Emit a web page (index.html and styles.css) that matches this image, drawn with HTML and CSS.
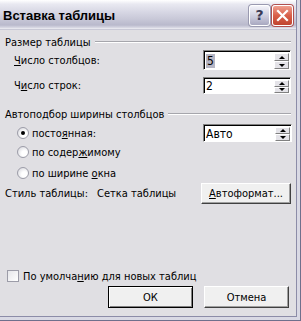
FILE: index.html
```html
<!DOCTYPE html>
<html>
<head>
<meta charset="utf-8">
<link rel="stylesheet" href="styles.css">
</head>
<body>
<div class="frame">
  <div class="window">
    <div class="titlebar">
      <span class="title">Вставка таблицы</span>
      <div class="tbtns">
        <span class="tb help">?</span>
        <span class="tb close">
          <svg width="13" height="13" viewBox="0 0 13 13"><path d="M2 2L11 11M11 2L2 11" stroke="#fff" stroke-width="2.2" stroke-linecap="square"/></svg>
        </span>
      </div>
    </div>
    <div class="content">
      <div class="group-head"><span>Размер таблицы</span><span class="etch"></span></div>
      <div class="row r1">
        <span class="label ind"><span><u>Ч</u>исло столбцов:</span></span>
        <div class="spin">
          <div class="field"><span class="sel">5</span></div>
          <div class="arrows"><span class="ab"><i class="up"></i></span><span class="ab"><i class="dn"></i></span></div>
        </div>
      </div>
      <div class="row r2">
        <span class="label ind"><span>Ч<u>и</u>сло строк:</span></span>
        <div class="spin">
          <div class="field">2</div>
          <div class="arrows"><span class="ab"><i class="up"></i></span><span class="ab"><i class="dn"></i></span></div>
        </div>
      </div>
      <div class="group-head g2"><span>Автоподбор ширины столбцов</span><span class="etch"></span></div>
      <div class="row r3">
        <span class="label radio-l"><span class="radio on"></span><span>посто<u>я</u>нная:</span></span>
        <div class="spin wide">
          <div class="field">Авто</div>
          <div class="arrows"><span class="ab"><i class="up"></i></span><span class="ab"><i class="dn"></i></span></div>
        </div>
      </div>
      <div class="row r4"><span class="label radio-l"><span class="radio"></span><span>по содер<u>ж</u>имому</span></span></div>
      <div class="row r5"><span class="label radio-l"><span class="radio"></span><span>по ширине <u>о</u>кна</span></span></div>
      <div class="row r6">
        <span class="label style-l">Стиль таблицы:</span>
        <span class="label style-v">Сетка таблицы</span>
        <span class="btn auto"><span><u>А</u>втоформат...</span></span>
      </div>
      <div class="row r7"><span class="label"><span class="check"></span><span>По умолча<u>н</u>ию для новых таблиц</span></span></div>
      <div class="row r8">
        <span class="btn ok def">ОК</span>
        <span class="btn cancel">Отмена</span>
      </div>
    </div>
  </div>
</div>
</body>
</html>
```
FILE: styles.css
```css
html, body { margin: 0; padding: 0; }
body {
  width: 301px; height: 321px; overflow: hidden;
  font-family: "DejaVu Sans Condensed", "DejaVu Sans", sans-serif;
  font-size: 11px; color: #000;
  background: #e0dfe3;
}
.frame {
  width: 301px; height: 321px; box-sizing: border-box;
  border-right: 1px solid #6f6f8c; border-bottom: 1px solid #6f6f8c;
  padding-right: 3px; padding-bottom: 3px;
  background: #d9d9e4;
}
.window {
  height: 100%; box-sizing: border-box;
  border-right: 1px solid #8c8ca8; border-bottom: 1px solid #8c8ca8;
  background: #e0dfe3;
  display: flex; flex-direction: column;
}
.titlebar {
  height: 29px; flex: none;
  background: linear-gradient(#ffffff 0px, #e9e9f1 4px, #d7d7e4 12px, #c6c6d6 20px, #b9b9cc 25px, #dcdce6 28px, #f2f2f6 29px);
  border-bottom: 1px solid #c9c9d6;
  display: flex; align-items: center; justify-content: space-between;
}
.title {
  font-family: "Liberation Sans", sans-serif; font-weight: bold; font-size: 13px;
  color: #000; padding-left: 3px; padding-top: 1px;
}
.tbtns { display: flex; gap: 2px; padding-right: 3px; padding-top: 1px; }
.tb {
  width: 19px; height: 19px; border: 1px solid #fff; border-radius: 3px;
  display: flex; align-items: center; justify-content: center;
  box-shadow: 0 0 0 1px #9a9ab0;
}
.help {
  background: linear-gradient(#f4f4fa, #c8c8da 60%, #a8a8c0);
  color: #3a3a56; font-family: "DejaVu Sans", sans-serif; font-weight: bold; font-size: 14px;
}
.close {
  background: linear-gradient(#f0a090, #d8604a 50%, #c04430);
  box-shadow: 0 0 0 1px #b05050;
}
.content { flex: 1; padding: 0 4px 0 5px; display: flex; flex-direction: column; }
.group-head { height: 14px; margin-top: 5px; display: flex; align-items: center; gap: 4px; flex: none; }
.group-head.g2 { margin-top: 13px; }
.etch { flex: 1; height: 0; border-top: 1px solid #a6a6ac; border-bottom: 1px solid #fff; margin-right: 1px; }
.row { display: flex; align-items: center; flex: none; }
.r1 { height: 20px; margin-top: 1px; justify-content: space-between; }
.r2 { height: 17px; margin-top: 7px; justify-content: space-between; }
.r3 { height: 18px; margin-top: 3px; justify-content: space-between; }
.r4 { height: 16px; margin-top: 2px; }
.r5 { height: 16px; margin-top: 5px; }
.r6 { height: 21px; margin-top: 2px; }
.r7 { height: 14px; margin-top: 65px; }
.r8 { height: 22px; margin-top: 3px; justify-content: flex-end; gap: 11px; padding-right: 3px; }
.ind { padding-left: 9px; }
.label { display: flex; align-items: center; white-space: nowrap; }
u { text-decoration: underline; text-underline-offset: 1px; }
.spin {
  width: 88px; height: 100%; box-sizing: border-box;
  border-top: 1px solid #808080; border-left: 1px solid #808080;
  border-right: 1px solid #fff; border-bottom: 1px solid #fff;
  display: flex; margin-right: 1px;
}
.spin.wide { width: 89px; margin-right: 0; }
.field {
  flex: 1; background: #fff;
  border-top: 1px solid #000; border-left: 1px solid #000;
  display: flex; align-items: center; padding-left: 1px;
  font-size: 12px;
}
.sel { background: #b6b6c4; padding: 0 1px; }
.arrows { width: 16px; display: flex; flex-direction: column; background: #fff; border-top: 1px solid #000; padding: 1px 1px 0 0; box-sizing: border-box; }
.ab {
  flex: 1; background: #e4e3e8; box-sizing: border-box;
  border-top: 1px solid #fff; border-left: 1px solid #fff;
  border-right: 1px solid #808080; border-bottom: 1px solid #808080;
  display: flex; align-items: center; justify-content: center;
}
.up, .dn { width: 0; height: 0; border-left: 3px solid transparent; border-right: 3px solid transparent; }
.up { border-bottom: 3px solid #000; }
.dn { border-top: 3px solid #000; }
.radio-l { padding-left: 12px; gap: 3px; }
.radio {
  width: 12px; height: 12px; border-radius: 50%; box-sizing: border-box;
  border: 1px solid #9c9ca8;
  background: radial-gradient(circle at 65% 65%, #ffffff 30%, #e4e4e8 70%, #c8c8d0 100%);
  position: relative;
}
.radio.on::after {
  content: ""; position: absolute; left: 3px; top: 3px; width: 4px; height: 4px;
  border-radius: 50%; background: #000;
}
.style-l { width: 92px; }
.style-v { flex: 1; }
.btn {
  box-sizing: border-box; height: 22px;
  background: #f0f0f0;
  border-top: 1px solid #fff; border-left: 1px solid #fff;
  border-right: 1px solid #404040; border-bottom: 1px solid #404040;
  box-shadow: inset -1px -1px 0 #a0a0a0;
  display: flex; align-items: center; justify-content: center;
}
.auto { width: 90px; margin-right: 1px; height: 21px; }
.ok, .cancel { width: 85px; height: 22px; }
.def { border: 1px solid #000; box-shadow: inset 1px 1px 0 #fff, inset -1px -1px 0 #808080; }
.check {
  width: 12px; height: 12px; box-sizing: border-box;
  border: 1px solid #9c9ca8; background: linear-gradient(135deg, #e6e6ea, #ffffff);
  margin: 0 4px 0 2px;
}
```
